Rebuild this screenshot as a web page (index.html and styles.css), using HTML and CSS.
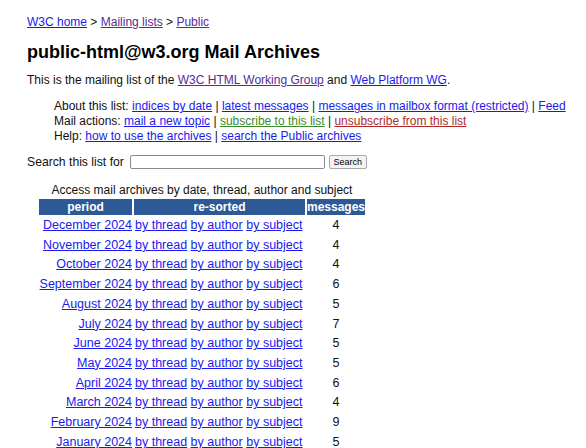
FILE: index.html
```html
<!DOCTYPE html>
<html>
<head>
<meta charset="utf-8">
<title>public-html@w3.org Mail Archives</title>
<link rel="stylesheet" href="styles.css">
</head>
<body>
<div class="page">
  <p class="crumbs"><a href="#">W3C home</a> &gt; <a class="visited" href="#">Mailing lists</a> &gt; <a class="visited" href="#">Public</a></p>
  <h1 class="title">public-html@w3.org Mail Archives</h1>
  <p class="intro">This is the mailing list of the <a class="visited" href="#">W3C HTML Working Group</a> and <a href="#">Web Platform WG</a>.</p>
  <div class="actions">
    <div>About this list: <a href="#">indices by date</a> | <a href="#">latest messages</a> | <a href="#">messages in mailbox format (restricted)</a> | <a href="#">Feed</a></div>
    <div>Mail actions: <a href="#">mail a new topic</a> | <a class="green" href="#">subscribe to this list</a> | <a class="red" href="#">unsubscribe from this list</a></div>
    <div>Help: <a href="#">how to use the archives</a> | <a href="#">search the Public archives</a></div>
  </div>
  <form class="search">
    <label>Search this list for</label>
    <input class="field" type="text">
    <button class="btn" type="button">Search</button>
  </form>
  <table class="archive">
    <caption>Access mail archives by date, thread, author and subject</caption>
    <thead>
      <tr><th class="c-period">period</th><th class="c-sort">re-sorted</th><th class="c-msg">messages</th></tr>
    </thead>
    <tbody>
      <tr><td class="period"><a href="#">December 2024</a></td><td class="sort"><a href="#">by thread</a> <a href="#">by author</a> <a href="#">by subject</a></td><td class="num">4</td></tr>
      <tr><td class="period"><a href="#">November 2024</a></td><td class="sort"><a href="#">by thread</a> <a href="#">by author</a> <a href="#">by subject</a></td><td class="num">4</td></tr>
      <tr><td class="period"><a href="#">October 2024</a></td><td class="sort"><a href="#">by thread</a> <a href="#">by author</a> <a href="#">by subject</a></td><td class="num">4</td></tr>
      <tr><td class="period"><a href="#">September 2024</a></td><td class="sort"><a href="#">by thread</a> <a href="#">by author</a> <a href="#">by subject</a></td><td class="num">6</td></tr>
      <tr><td class="period"><a href="#">August 2024</a></td><td class="sort"><a href="#">by thread</a> <a href="#">by author</a> <a href="#">by subject</a></td><td class="num">5</td></tr>
      <tr><td class="period"><a href="#">July 2024</a></td><td class="sort"><a href="#">by thread</a> <a href="#">by author</a> <a href="#">by subject</a></td><td class="num">7</td></tr>
      <tr><td class="period"><a href="#">June 2024</a></td><td class="sort"><a href="#">by thread</a> <a href="#">by author</a> <a href="#">by subject</a></td><td class="num">5</td></tr>
      <tr><td class="period"><a href="#">May 2024</a></td><td class="sort"><a href="#">by thread</a> <a href="#">by author</a> <a href="#">by subject</a></td><td class="num">5</td></tr>
      <tr><td class="period"><a href="#">April 2024</a></td><td class="sort"><a href="#">by thread</a> <a href="#">by author</a> <a href="#">by subject</a></td><td class="num">6</td></tr>
      <tr><td class="period"><a href="#">March 2024</a></td><td class="sort"><a href="#">by thread</a> <a href="#">by author</a> <a href="#">by subject</a></td><td class="num">4</td></tr>
      <tr><td class="period"><a href="#">February 2024</a></td><td class="sort"><a href="#">by thread</a> <a href="#">by author</a> <a href="#">by subject</a></td><td class="num">9</td></tr>
      <tr><td class="period"><a href="#">January 2024</a></td><td class="sort"><a href="#">by thread</a> <a href="#">by author</a> <a href="#">by subject</a></td><td class="num">5</td></tr>
    </tbody>
  </table>
</div>
</body>
</html>
```
FILE: styles.css
```css
html, body {
  margin: 0;
  padding: 0;
  background: #fff;
}
body {
  font-family: "Liberation Sans", Arial, Helvetica, sans-serif;
  font-size: 12px;
  line-height: 14px;
  color: #111;
}
.page {
  padding: 15px 27px 0 27px;
}
a {
  color: #1a1aee;
  text-decoration: underline;
}
a.visited {
  color: #5a2a96;
}
a.green {
  color: #3c8a2e;
}
a.red {
  color: #b02a2a;
}
.crumbs {
  margin: 0;
}
.title {
  margin: 12px 0 0 0;
  font-size: 18px;
  line-height: 22px;
  font-weight: bold;
  color: #000;
}
.intro {
  margin: 10px 0 0 0;
}
.actions {
  margin: 12px 0 0 27px;
  line-height: 15px;
  white-space: nowrap;
}
.search {
  margin: 11px 0 0 0;
  height: 14px;
  display: flex;
  align-items: center;
  font-size: 12.2px;
}
.field {
  box-sizing: border-box;
  width: 195px;
  height: 14px;
  margin: 0 0 0 6px;
  padding: 0 2px;
  border: 1px solid #8a8a8a;
  border-radius: 2px;
  font-size: 11px;
}
.btn {
  box-sizing: border-box;
  width: 38px;
  height: 14px;
  margin: 0 0 0 4px;
  padding: 0;
  font-family: "Liberation Sans", Arial, sans-serif;
  font-size: 9px;
  line-height: 12px;
  background: #f4f4f4;
  border: 1px solid #a8a8a8;
  border-radius: 2px;
  color: #000;
}
.archive {
  margin: 14px 0 0 10px;
  border-collapse: separate;
  border-spacing: 2px;
}
.archive caption {
  line-height: 14px;
}
.archive th {
  background: #2d5a96;
  color: #fff;
  font-weight: bold;
  padding: 1px 0;
  line-height: 14px;
}
.archive td {
  padding: 1px 0;
  font-size: 12.5px;
  line-height: 15.7px;
  white-space: nowrap;
}
.archive td.period {
  text-align: right;
}
.archive td.sort {
  padding-left: 1px;
}
.c-period {
  width: 93px;
}
.c-sort {
  width: 171px;
}
.c-msg {
  width: 58px;
}
.archive td.num {
  text-align: center;
}
```
